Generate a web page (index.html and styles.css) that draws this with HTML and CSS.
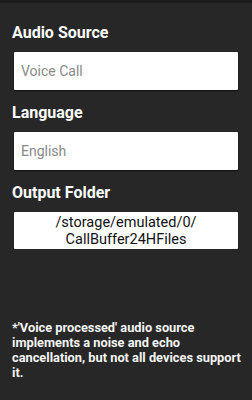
FILE: index.html
```html
<!DOCTYPE html>
<html lang="en">
<head>
    <meta charset="UTF-8">
    <meta name="viewport" content="width=device-width, initial-scale=1.0">
    <title>Settings</title>
    <link rel="stylesheet" href="styles.css">
</head>
<body>
    <div class="settings">
        <div class="label">Audio Source</div>
        <div class="field"><span class="placeholder">Voice Call</span></div>

        <div class="label">Language</div>
        <div class="field"><span class="placeholder">English</span></div>

        <div class="label">Output Folder</div>
        <button class="folder">/storage/emulated/0/<br>CallBuffer24HFiles</button>

        <div class="note">
            *'Voice processed' audio source implements a noise and echo cancellation, but not all devices support it.
        </div>
    </div>
</body>
</html>
```

FILE: styles.css
```css
body {
    margin: 0;
    background: #272727;
    font-family: Roboto, "Noto Sans", sans-serif;
    color: #fff;
}

.settings {
    border-top: 3px solid #1c1c1c;
    padding: 18px 12px 0 12px;
}

.label {
    font-size: 16px;
    font-weight: bold;
    line-height: 24px;
    margin-bottom: 7px;
}

.field {
    margin: 0 2px 11px 2px;
    height: 38px;
    background: #fff;
    border-radius: 1px;
    box-shadow: 0 1px 2px rgba(0, 0, 0, 0.6);
    display: flex;
    align-items: center;
    padding-left: 7px;
}

.placeholder {
    font-size: 14px;
    color: #8a8a8a;
}

.folder {
    display: block;
    width: 224px;
    margin: 0 2px;
    height: 37px;
    background: #fff;
    border: none;
    border-radius: 1px;
    font-family: Roboto, "Noto Sans", sans-serif;
    font-size: 14.5px;
    line-height: 17px;
    color: #111;
    padding: 0;
}

.note {
    margin-top: 71px;
    margin-right: -4px;
    font-size: 12.8px;
    font-weight: bold;
    line-height: 15px;
    color: #f4f4f4;
}
```
